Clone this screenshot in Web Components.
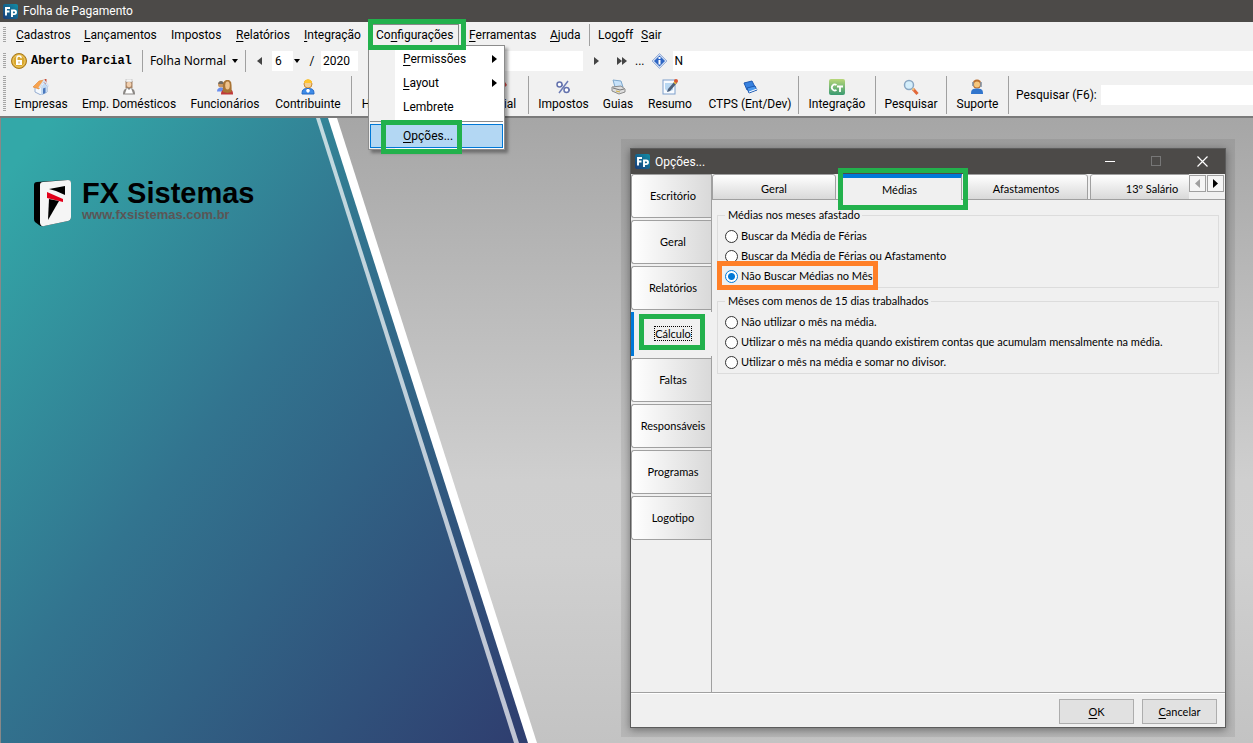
<!DOCTYPE html>
<html lang="pt-BR">
<head>
<meta charset="utf-8">
<title>Folha de Pagamento</title>
<style>
html, body { margin: 0; height: 100%; }
body { font: 12px/16px Roboto, "Noto Sans", sans-serif; color: #000; background: #f0f0f0; overflow: hidden; }
</style>
</head>
<body>
<fx-app></fx-app>

<template id="t-app">
<style>
:host { display: flex; flex-direction: column; height: 100vh; }
header { background: #f1f1f1; border-bottom: 2px solid #7a7a7a; }
fx-desktop { flex: 1; min-height: 0; }
</style>
<fx-titlebar label="Folha de Pagamento"></fx-titlebar>
<header>
  <fx-menubar></fx-menubar>
  <fx-period-bar></fx-period-bar>
  <fx-toolbar></fx-toolbar>
</header>
<fx-desktop><fx-dialog></fx-dialog></fx-desktop>
</template>

<template id="t-titlebar">
<style>
:host { display: flex; align-items: center; gap: 5px; height: 22px; padding-left: 3px; background: #4c4a48; color: #fff; }
:host([dialog]) { height: 25px; padding: 0 0 0 4px; gap: 5px; }
svg.logo { width: 15px; height: 15px; flex: none; }
span { flex: 1; }
nav { display: none; }
:host([dialog]) nav { display: flex; }
button { width: 46px; height: 25px; padding: 0; border: 0; background: none; display: grid; place-items: center; }
</style>
<svg class="logo" viewBox="0 0 15 15"><defs><linearGradient id="g" x1="1" y1="0" x2="0" y2="1"><stop offset="0" stop-color="#118ea6"/><stop offset="1" stop-color="#183a78"/></linearGradient></defs><rect width="15" height="15" rx="2" fill="url(#g)"/><path d="M3 11.500V4h4M3 7.500h3.500M9 13V6.500h2.200q1.800 0 1.800 1.800t-1.800 1.800H9" fill="none" stroke="#fff" stroke-width="1.900"/></svg>
<span></span>
<nav>
<button aria-label="Minimizar"><svg width="11" height="11"><path d="M0 5.500h10" stroke="#fff"/></svg></button>
<button aria-label="Maximizar" disabled><svg width="11" height="11"><rect x=".5" y=".5" width="9" height="9" fill="none" stroke="#777"/></svg></button>
<button aria-label="Fechar"><svg width="11" height="11"><path d="M.5.5l10 10M10.500.500l-10 10" stroke="#fff" stroke-width="1.200"/></svg></button>
</nav>
</template>

<template id="t-mark">
<style>:host { position: absolute; box-sizing: border-box; border: 5px solid #22b14c; pointer-events: none; z-index: 5; } :host([orange]) { border-color: #ff7f27; }</style>
</template>

<template id="t-grip">
<style>:host { display: block; width: 3px; margin-left: 3px; background: repeating-linear-gradient(#a5a5a5 0 1px, #f1f1f1 1px 2px); }</style>
</template>

<template id="t-menubar">
<style>
:host { display: grid; grid-template-columns: 6px 68px 87px 65px 68px 72px 93px 81px 48px 43px auto; height: 26px; padding-right: 8px; justify-content: start; }
fx-grip { height: 16px; margin-top: 5px; }
.item { position: relative; display: flex; }
button { all: unset; padding: 0 0 0 10px; white-space: nowrap; }
u { text-underline-offset: 2px; }
.open { z-index: 10; }
.open button { border: 1px solid #888; border-bottom: 0; margin: 2px 0 0 4px; padding: 0 0 3px 5px; flex: 1; }
.after { border-left: 1px solid #a0a0a0; margin: 2px 0 2px 1px; }
.after button { padding-left: 8px; }
.open fx-mark { left: 2px; right: -7px; top: -3px; bottom: -2px; }
fx-menu { position: absolute; left: 2px; top: 23px; }
</style>
<fx-grip></fx-grip>
<div class="item"><button><u>C</u>adastros</button></div>
<div class="item"><button><u>L</u>ançamentos</button></div>
<div class="item"><button>Impostos</button></div>
<div class="item"><button><u>R</u>elatórios</button></div>
<div class="item"><button><u>I</u>ntegração</button></div>
<div class="item open"><button aria-expanded="true">Co<u>n</u>figurações</button><fx-menu></fx-menu><fx-mark></fx-mark></div>
<div class="item"><button><u>F</u>erramentas</button></div>
<div class="item"><button><u>A</u>juda</button></div>
<div class="item after"><button>Log<u>o</u>ff</button></div>
<div class="item"><button><u>S</u>air</button></div>
</template>

<template id="t-menu">
<style>
:host { display: block; box-sizing: border-box; width: 137px; padding: 1px; border: 1px solid #8c8c8c; background: linear-gradient(90deg, #f1f1f1 26px, #fff 26px); box-shadow: 3px 3px 3px rgba(0,0,0,.35); }
button { all: unset; box-sizing: border-box; display: flex; align-items: center; justify-content: space-between; width: 100%; height: 24px; padding: 0 6px 0 33px; }
u { text-underline-offset: 2px; }
hr { margin: 2px 0; border: 0; border-top: 1px solid #8c8c8c; }
.on { position: relative; padding-left: 32px; background: #b3d7f3; border: 1px solid #0078d7; }
fx-mark { left: 10px; right: 40px; top: -5px; bottom: -7px; }
</style>
<button><span><u>P</u>ermissões</span><svg width="5" height="8"><path d="M0 0l5 4-5 4z"/></svg></button>
<button><span><u>L</u>ayout</span><svg width="5" height="8"><path d="M0 0l5 4-5 4z"/></svg></button>
<button>Lembrete</button>
<hr>
<button class="on"><span><u>O</u>pções...</span><fx-mark></fx-mark></button>
</template>

<template id="t-period">
<style>
:host { display: flex; align-items: center; height: 28px; padding-bottom: 2px; box-sizing: border-box; }
fx-grip { height: 16px; flex: none; }
.lock { margin: 0 4px 0 5px; flex: none; }
b { font: bold 12px/16px "Liberation Mono", monospace; width: 111px; white-space: nowrap; }
.sep { width: 1px; height: 22px; background: #a0a0a0; flex: none; }
button { all: unset; display: flex; align-items: center; justify-content: center; }
.kind { font: 12px/16px "Noto Sans", sans-serif; width: 102px; gap: 6px; white-space: nowrap; }
.step { width: 26px; }
input { box-sizing: border-box; height: 20px; padding: 0 2px; border: 0; background: #fff; font: inherit; min-width: 0; }
.month { position: relative; display: flex; }
select { appearance: none; width: 31px; height: 20px; padding: 0 0 0 3px; border: 0; border-radius: 0; font: inherit; color: #000; background: linear-gradient(90deg, #fff 21px, #f1f1f1 21px); }
.month svg { position: absolute; right: 3px; top: 8px; }
.slash { width: 18px; text-align: center; }
.year { width: 37px; margin-right: 12px; }
.name { width: 213px; }
.info { margin: 0 5px 0 6px; flex: none; }
.rest { flex: 1; }
</style>
<fx-grip></fx-grip>
<svg class="lock" width="16" height="16" viewBox="0 0 16 16"><circle cx="8" cy="8" r="7.500" fill="#d9a72e" stroke="#a87a20"/><circle cx="8" cy="8" r="6" fill="none" stroke="#edc968"/><path d="M5.800 7.500V5.200a2.200 2.200 0 0 1 4.400 0" fill="none" stroke="#fff" stroke-width="1.300"/><rect x="5" y="7" width="6" height="5" fill="#fff"/><path d="M8 8.500v2" stroke="#c18e24"/></svg>
<b>Aberto Parcial</b>
<i class="sep"></i>
<button class="kind">Folha Normal <svg width="6" height="4"><path d="M0 0h6L3 4z"/></svg></button>
<i class="sep"></i>
<button class="step" aria-label="Mês anterior"><svg width="5" height="8"><path d="M5 0v8L0 4z" fill="#444"/></svg></button>
<span class="month"><select aria-label="Mês"><option>6</option></select><svg width="6" height="4"><path d="M0 0h6L3 4z"/></svg></span>
<span class="slash">/</span>
<input class="year" aria-label="Ano" value="2020">
<input class="name" aria-label="Empresa">
<button class="step" aria-label="Próximo"><svg width="5" height="8"><path d="M0 0l5 4-5 4z" fill="#444"/></svg></button>
<button class="step" aria-label="Último"><svg width="10" height="8"><path d="M0 0l5 4-5 4zM5 0l5 4-5 4z" fill="#444"/></svg></button>
<button>...</button>
<svg class="info" width="17" height="16" viewBox="0 0 17 16"><path d="M8.500 0.500L16 8l-7.500 7.500L1 8z" fill="#cfdcf0" stroke="#9ab0d8"/><path d="M8.500 2.500L14 8l-5.500 5.500L3 8z" fill="#2f66c4"/><path d="M8.500 4v2M8.500 7v4.500" stroke="#fff" stroke-width="2"/></svg>
<input class="rest" aria-label="Nome" value="N">
</template>

<template id="t-toolbar">
<style>
:host { display: grid; height: 40px; grid-template-columns: 6px 70px 106px 86px 80px 4px 20px 156px 70px 40px 64px 96px 77px 71px 62px 93px 1fr; }
fx-grip { height: 36px; }
fx-tool.sep, label { border-left: 1px solid #a0a0a0; height: 38px; }
label { display: flex; align-items: center; padding-left: 7px; white-space: nowrap; }
.line { border-left: 1px solid #a0a0a0; height: 38px; margin-left: 3px; }
.cut { justify-content: start; padding-left: 6px; }
.tail { justify-content: end; padding-right: 10px; }
input { box-sizing: border-box; height: 20px; margin-top: 9px; border: 0; padding: 0 4px; min-width: 0; font: inherit; background: #fff; }
</style>
<fx-grip></fx-grip>
<fx-tool label="Empresas"><svg viewBox="0 0 16 16"><path d="M11.500 0h2v5h-2z" fill="#c8503a"/><path d="M2 8v5l6 3 6-3V7l-4-4z" fill="#f3f8fd" stroke="#94acd0"/><path d="M8 16V8l3-4 3 3v6z" fill="#c5dbf2"/><path d="M0 8l6-6 5-1-5 9z" fill="#f7a34f" stroke="#dd8436" stroke-width=".6"/><path d="M6 9l5-7.500 5 6" fill="none" stroke="#d7e3f2" stroke-width="1.500"/><path d="M10 9.500l2.500-1v5.500l-2.500 1z" fill="#4a78bd"/></svg></fx-tool>
<fx-tool label="Emp. Domésticos"><svg viewBox="0 0 16 16"><path d="M4.500 2h7v7h-7z" fill="#a98566"/><path d="M5 0h6v3H5z" fill="#f6f6f6" stroke="#aaa" stroke-width=".5"/><ellipse cx="8" cy="5.500" rx="2.300" ry="2.800" fill="#f1cfae"/><path d="M2 15.500c0-5 2-6.500 6-6.500s6 1.500 6 6.500z" fill="#8b8885"/><path d="M6 9l2 2 2-2 2 5.500H4z" fill="#fff"/></svg></fx-tool>
<fx-tool label="Funcionários"><svg viewBox="0 0 16 16"><circle cx="4" cy="5.500" r="3" fill="#c89763"/><path d="M1.200 5c0-4 5.600-4 5.600 0z" fill="#6f6a62"/><path d="M0 12.500c0-3 2-4 4-4s4 1 4 4z" fill="#6a8ff0"/><path d="M4 15.500c0-4 2-5.500 6.500-5.500s5.500 1.500 5.500 5.500z" fill="#c03a3a"/><path d="M6 13c-1-10 1-12 4.500-12S15 3 14.500 13l-4 1z" fill="#a97435"/><ellipse cx="10.500" cy="6.500" rx="2.300" ry="4" fill="#eec28c"/></svg></fx-tool>
<fx-tool label="Contribuinte"><svg viewBox="0 0 16 16"><circle cx="8" cy="5" r="4" fill="#f4cf93" stroke="#cc8b32"/><path d="M4 4c0-5 8-5 8 0z" fill="#ffc52e"/><path d="M2 15c0-5 2-5.500 6-5.500s6 .5 6 5.500z" fill="#3d8be8" stroke="#2469c4"/><path d="M7 10h2l1 2-2 2-2-2z" fill="#fff"/></svg></fx-tool>
<span class="line"></span>
<fx-tool class="cut" label="H"></fx-tool>
<fx-tool class="tail" label="ial"><svg viewBox="0 0 16 16"><path d="M1 3h2l2 3-2 2H1z" fill="#d84a44"/></svg></fx-tool>
<fx-tool class="sep" label="Impostos"><svg viewBox="0 0 16 16"><path d="M4 14L13 2M2 6h6M9 11h6" stroke="#6c7bb5" stroke-width="1.500"/><circle cx="4.500" cy="5.500" r="2.500" fill="#fff" stroke="#6472ad" stroke-width="1.500"/><circle cx="11.500" cy="11" r="2.500" fill="#fff" stroke="#6472ad" stroke-width="1.500"/></svg></fx-tool>
<fx-tool label="Guias"><svg viewBox="0 0 16 16"><path d="M3 1l8 1 2 6H5z" fill="#c7e2fa" stroke="#7fa8cc"/><path d="M2 8l9-1 4 3v3l-6 2-7-3z" fill="#ddd" stroke="#8b8b8b"/><path d="M3 9l7 2 4-1" fill="none" stroke="#777"/><path d="M6 12l4 1" stroke="#d7b13b"/></svg></fx-tool>
<fx-tool label="Resumo"><svg viewBox="0 0 16 16"><rect x="1" y="1" width="12" height="14" fill="#f8fbff" stroke="#7fa0cc"/><path d="M3 4h8v7l-5 2-3-3z" fill="#b8d7f2"/><path d="M5 13l1-3 7-8 2 2-7 8z" fill="#4e5f78"/><circle cx="14" cy="2" r="2" fill="#dc5430"/><path d="M12 3l2 2" stroke="#e8b83c" stroke-width="1.500"/></svg></fx-tool>
<fx-tool label="CTPS (Ent/Dev)"><svg viewBox="0 0 16 16"><path d="M2 4l8-2 3 6-8 3z" fill="#3781df" stroke="#1d58b0"/><path d="M5 9l8-2 2 4-8 3z" fill="#4c99ed" stroke="#1d58b0"/><path d="M7 13l8-3" stroke="#fff"/></svg></fx-tool>
<fx-tool class="sep" label="Integração"><svg viewBox="0 0 16 16"><defs><linearGradient id="c" x2="0" y2="1"><stop stop-color="#b8d779"/><stop offset="1" stop-color="#3a9a71"/></linearGradient></defs><rect width="16" height="16" rx="2" fill="url(#c)"/><path d="M7.500 6A3 3 0 1 0 7.500 11M8 7.500h6M11 7.500V13" fill="none" stroke="#fff" stroke-width="1.800"/></svg></fx-tool>
<fx-tool class="sep" label="Pesquisar"><svg viewBox="0 0 16 16"><circle cx="6" cy="6" r="4.500" fill="#d4eefb" stroke="#8aa7c3" stroke-width="1.500"/><path d="M10 10l4.500 5" stroke="#e2683a" stroke-width="3"/><path d="M9.500 9.500l1.500 1.500" stroke="#efc078" stroke-width="2"/></svg></fx-tool>
<fx-tool class="sep" label="Suporte"><svg viewBox="0 0 16 16"><circle cx="8" cy="5" r="4.500" fill="#b96f2e"/><circle cx="8" cy="5.500" r="3" fill="#f6c77d"/><path d="M12 3v5M4 3v4" stroke="#8296ad" stroke-width="1.500"/><path d="M2 15c0-5 2-5.500 6-5.500s6 .5 6 5.500z" fill="#3175cc"/></svg></fx-tool>
<label for="q">Pesquisar (F6):</label><input id="q">
</template>

<template id="t-tool">
<style>
:host { display: flex; justify-content: center; min-width: 0; white-space: nowrap; }
button { all: unset; display: flex; flex-direction: column; align-items: center; gap: 1px; padding-top: 3px; height: 37px; box-sizing: border-box; }
.i { height: 16px; width: 16px; }
::slotted(svg) { width: 16px; height: 16px; display: block; }
</style>
<button><span class="i"><slot></slot></span><span class="l"></span></button>
</template>

<template id="t-desktop">
<style>
:host { display: block; position: relative; overflow: hidden; background: linear-gradient(#a6a6a6, #cfcfcf 58%, #d0d0d0 70%, #c3c3c3); border-left: 1px solid #888; }
.art { position: absolute; inset: 0; width: 100%; height: 100%; }
.brand { position: relative; display: grid; grid-template-columns: 41px auto; column-gap: 8px; justify-content: start; padding: 61px 0 0 32px; font-family: "Liberation Sans", sans-serif; }
.brand svg { grid-row: 1 / 3; }
.brand strong { font-size: 29px; line-height: 28px; }
.brand a { font-size: 13px; line-height: 13px; font-weight: bold; color: #5b5656; text-decoration: none; margin-top: -6px; }
</style>
<svg class="art" viewBox="0 0 1253 625" preserveAspectRatio="xMinYMin slice"><defs><linearGradient id="b" gradientUnits="userSpaceOnUse" x1="0" y1="0" x2="620" y2="480"><stop offset=".05" stop-color="#33a8a8"/><stop offset=".45" stop-color="#32748f"/><stop offset="1" stop-color="#2f3f70"/></linearGradient></defs><path d="M0 0H328L528 625H0z" fill="url(#b)"/><path d="M315 0h4L518 625h-5z" fill="#fff" fill-opacity=".7"/><path d="M327 0h9L536 625h-9z" fill="#fff"/></svg>
<div class="brand">
<svg width="39" height="48" viewBox="0 0 39 48"><path d="M1 6q0-3 3-3L34 1q4 0 4 3v34q0 3-3 4L11 47q-3 1-5-1l-4-3q-1-1-1-3z" fill="#000"/><path d="M7 6q0-3 3-3l25-2q3 0 3 3v34q0 3-3 4L11 47q-3 1-4-3z" fill="#f5f5f5"/><path d="M16 10l16-3v9L23 12z" fill="#000"/><path d="M14 13l16 7v3l-16-4z" fill="#e2001a"/><path d="M16 20l10 2-11 19z" fill="#000"/></svg>
<strong>FX Sistemas</strong>
<a href="#">www.fxsistemas.com.br</a>
</div>
<slot></slot>
</template>

<template id="t-dialog">
<style>
:host { position: absolute; left: 629px; right: 27px; top: 30px; bottom: 15px; display: flex; flex-direction: column; box-sizing: border-box; border: 1px solid #5c5c5c; background: #f0f0f0; font: 11px/16px Lato, Arial, sans-serif; box-shadow: 0 0 0 9px rgba(0,0,0,.07), 0 2px 8px rgba(0,0,0,.4); }
fx-titlebar { font: 12px/16px Roboto, "Noto Sans", sans-serif; }
.body { flex: 1; display: grid; grid-template-columns: 81px 1fr; min-height: 0; border-bottom: 1px solid #a0a0a0; }
.side { display: flex; flex-direction: column; gap: 2px; border-right: 1px solid #a0a0a0; }
.side button { box-sizing: border-box; width: 80px; height: 44px; padding: 0 0 0 3px; border: 1px solid #a0a0a0; border-right: 0; border-radius: 3px 0 0 3px; background: linear-gradient(90deg, #fff, #d9d9d9); font: inherit; }
.side .on { position: relative; width: 81px; padding-left: 0; border: 0; border-left: 3px solid #0078d7; border-radius: 0; background: #f0f0f0; }
.on span { outline: 1px dotted #000; }
.side fx-mark { left: 5px; top: 2px; bottom: 6px; right: 7px; }
main { min-width: 0; }
.tabs { display: flex; position: relative; height: 26px; border-bottom: 1px solid #a0a0a0; box-sizing: border-box; }
.clip { display: grid; grid-template-columns: repeat(4, 124px); gap: 2px; flex: 1; min-width: 0; overflow: hidden; margin-bottom: -1px; }
.clip button { box-sizing: border-box; height: 26px; padding: 4px 0 0; border: 1px solid #a0a0a0; border-radius: 3px 3px 0 0; background: linear-gradient(#fff, #d9d9d9); font: inherit; }
.clip .sel { border: 0; border-top: 4px solid #0078d7; border-radius: 0; border-right: 1px solid #a0a0a0; background: #f0f0f0; padding: 1px 0 0; }
.tabs fx-mark { left: 126px; width: 130px; top: -6px; height: 42px; }
.scroll { width: 36px; display: flex; gap: 1px; padding: 1px 0; }
.scroll button { width: 17px; height: 17px; padding: 0; border: 1px solid #a0a0a0; background: #f5f5f5; display: grid; place-items: center; }
.page { padding: 7px 6px 0 5px; display: grid; gap: 5px; }
footer { display: flex; justify-content: flex-end; gap: 8px; padding: 5px 8px 3px; border-top: 1px solid #fff; }
footer button { width: 75px; height: 25px; border: 1px solid #adadad; background: #e1e1e1; padding: 0; font: inherit; }
u { text-underline-offset: 2px; }
</style>
<fx-titlebar dialog label="Opções..."></fx-titlebar>
<div class="body">
<nav class="side">
<button>Escritório</button><button>Geral</button><button>Relatórios</button>
<button class="on"><span>Cálculo</span><fx-mark></fx-mark></button>
<button>Faltas</button><button>Responsáveis</button><button>Programas</button><button>Logotipo</button>
</nav>
<main>
<div class="tabs">
<div class="clip"><button>Geral</button><button class="sel">Médias</button><button>Afastamentos</button><button>13º Salário</button></div>
<div class="scroll"><button disabled aria-label="Abas anteriores"><svg width="5" height="9"><path d="M5 0v9L0 4.500z" fill="#a0a0a0"/></svg></button><button aria-label="Próximas abas"><svg width="5" height="9"><path d="M0 0v9l5-4.500z"/></svg></button></div>
<fx-mark></fx-mark>
</div>
<div class="page">
<fx-choice label="Médias nos meses afastado" options="Buscar da Média de Férias|Buscar da Média de Férias ou Afastamento|*Não Buscar Médias no Mês"></fx-choice>
<fx-choice label="Mêses com menos de 15 dias trabalhados" options="Não utilizar o mês na média.|Utilizar o mês na média quando existirem contas que acumulam mensalmente na média.|Utilizar o mês na média e somar no divisor."></fx-choice>
</div>
</main>
</div>
<footer><button><u>O</u>K</button><button><u>C</u>ancelar</button></footer>
</template>

<template id="t-choice">
<style>
:host { display: block; }
fieldset { margin: 0; padding: 3px 7px 1px; border: 1px solid #dcdcdc; min-width: 0; }
legend { padding: 0 2px 0 3px; line-height: 16px; }
label { position: relative; display: flex; align-items: center; gap: 3px; height: 20px; width: max-content; }
input { appearance: none; box-sizing: border-box; width: 13px; height: 13px; margin: 0; border: 1px solid #333; border-radius: 50%; background: #fff; }
input:checked { border-color: #0078d7; background: radial-gradient(circle, #0078d7 3px, #fff 4px); }
fx-mark { left: -8px; right: -6px; top: -5px; bottom: -4px; }
</style>
<fieldset><legend></legend></fieldset>
</template>

<script>
const define = (name, id, setup) => customElements.define(name, class extends HTMLElement {
  constructor() {
    super();
    this.attachShadow({ mode: "open" }).append(document.getElementById(id).content.cloneNode(true));
  }
  connectedCallback() { if (setup && !this.ready) { this.ready = true; setup(this, this.shadowRoot); } }
});
define("fx-mark", "t-mark");
define("fx-grip", "t-grip");
define("fx-titlebar", "t-titlebar", (el, root) => { root.querySelector("span").textContent = el.getAttribute("label"); });
define("fx-tool", "t-tool", (el, root) => { root.querySelector(".l").textContent = el.getAttribute("label"); });
define("fx-menu", "t-menu");
define("fx-menubar", "t-menubar");
define("fx-period-bar", "t-period");
define("fx-toolbar", "t-toolbar");
define("fx-choice", "t-choice", (el, root) => {
  root.querySelector("legend").textContent = el.getAttribute("label");
  const set = root.querySelector("fieldset");
  for (const text of el.getAttribute("options").split("|")) {
    const on = text.startsWith("*");
    const label = document.createElement("label");
    const input = document.createElement("input");
    input.type = "radio"; input.name = "choice"; input.checked = on;
    label.append(input, on ? text.slice(1) : text);
    if (on) { const m = document.createElement("fx-mark"); m.setAttribute("orange", ""); label.append(m); }
    set.append(label);
  }
});
define("fx-dialog", "t-dialog");
define("fx-desktop", "t-desktop");
define("fx-app", "t-app");
</script>
</body>
</html>
